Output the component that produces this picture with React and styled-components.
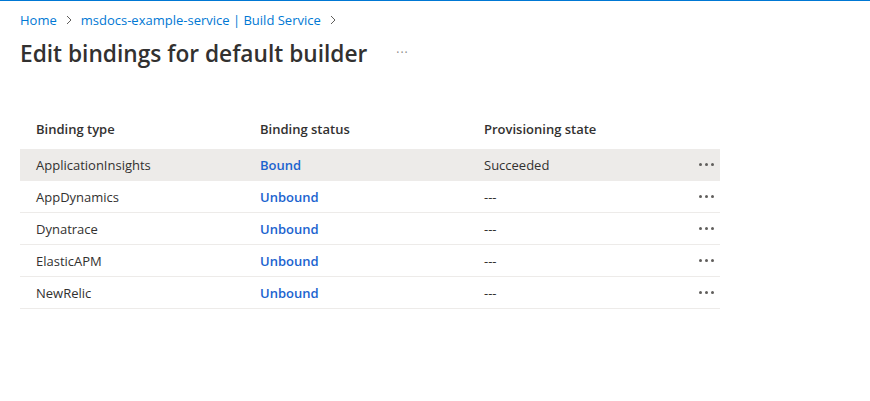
import React from "react";
import styled, { createGlobalStyle } from "styled-components";

const GlobalStyle = createGlobalStyle`
  html, body {
    margin: 0;
    padding: 0;
    background: #fff;
  }
  body {
    font-family: "Segoe UI", "Open Sans", "Noto Sans", sans-serif;
    color: #323130;
  }
`;

const Page = styled.div`
  width: 870px;
  height: 401px;
  box-sizing: border-box;
  border-top: 1px solid #0078d4;
  padding: 10px 20px 0;
  overflow: hidden;
`;

const Breadcrumb = styled.nav`
  display: flex;
  align-items: center;
  gap: 6px;
  font-size: 13px;
  line-height: 18px;
  height: 18px;
`;

const Crumb = styled.a`
  color: #0078d4;
  text-decoration: none;
`;

const Chevron = styled.svg`
  width: 8px;
  height: 10px;
  margin: 0 2px;
`;

const TitleRow = styled.div`
  display: flex;
  align-items: center;
  margin-top: 8px;
  height: 32px;
`;

const Title = styled.h1`
  margin: 0;
  font-size: 22.7px;
  font-weight: 600;
  color: #323130;
  letter-spacing: 0;
`;

const TitleMore = styled.span`
  margin-left: 29px;
  color: #8a8886;
  font-size: 12px;
  letter-spacing: 1px;
  line-height: 1;
`;

const Table = styled.div`
  width: 700px;
  margin-top: 41px;
  font-size: 13px;
`;

const Row = styled.div`
  display: grid;
  grid-template-columns: 224px 224px 1fr 40px;
  align-items: center;
  height: ${({ $header }) => ($header ? "38px" : "31px")};
  padding-left: 16px;
  background: ${({ $selected }) => ($selected ? "#edebe9" : "transparent")};
  border-bottom: 1px solid ${({ $header }) => ($header ? "transparent" : "#edebe9")};
  font-weight: ${({ $header }) => ($header ? 600 : 400)};
`;

const Cell = styled.div`
  white-space: nowrap;
`;

const Status = styled.span`
  color: #1b63cf;
  font-weight: 600;
`;

const Dots = styled.div`
  display: flex;
  gap: 3px;
  justify-content: flex-end;
  padding-right: 6px;
  span {
    width: 3px;
    height: 3px;
    border-radius: 50%;
    background: #605e5c;
  }
`;

const rows = [
  { type: "ApplicationInsights", status: "Bound", state: "Succeeded", selected: true },
  { type: "AppDynamics", status: "Unbound", state: "---" },
  { type: "Dynatrace", status: "Unbound", state: "---" },
  { type: "ElasticAPM", status: "Unbound", state: "---" },
  { type: "NewRelic", status: "Unbound", state: "---" },
];

function ChevronIcon() {
  return (
    <Chevron viewBox="0 0 8 10">
      <path d="M2 1l4 4-4 4" fill="none" stroke="#605e5c" strokeWidth="1" />
    </Chevron>
  );
}

export default function App() {
  return (
    <>
      <GlobalStyle />
      <Page>
        <Breadcrumb>
          <Crumb>Home</Crumb>
          <ChevronIcon />
          <Crumb>msdocs-example-service | Build Service</Crumb>
          <ChevronIcon />
        </Breadcrumb>
        <TitleRow>
          <Title>Edit bindings for default builder</Title>
          <TitleMore>···</TitleMore>
        </TitleRow>
        <Table>
          <Row $header>
            <Cell>Binding type</Cell>
            <Cell>Binding status</Cell>
            <Cell>Provisioning state</Cell>
            <Cell />
          </Row>
          {rows.map((r) => (
            <Row key={r.type} $selected={r.selected}>
              <Cell>{r.type}</Cell>
              <Cell>
                <Status>{r.status}</Status>
              </Cell>
              <Cell>{r.state}</Cell>
              <Dots>
                <span />
                <span />
                <span />
              </Dots>
            </Row>
          ))}
        </Table>
      </Page>
    </>
  );
}
